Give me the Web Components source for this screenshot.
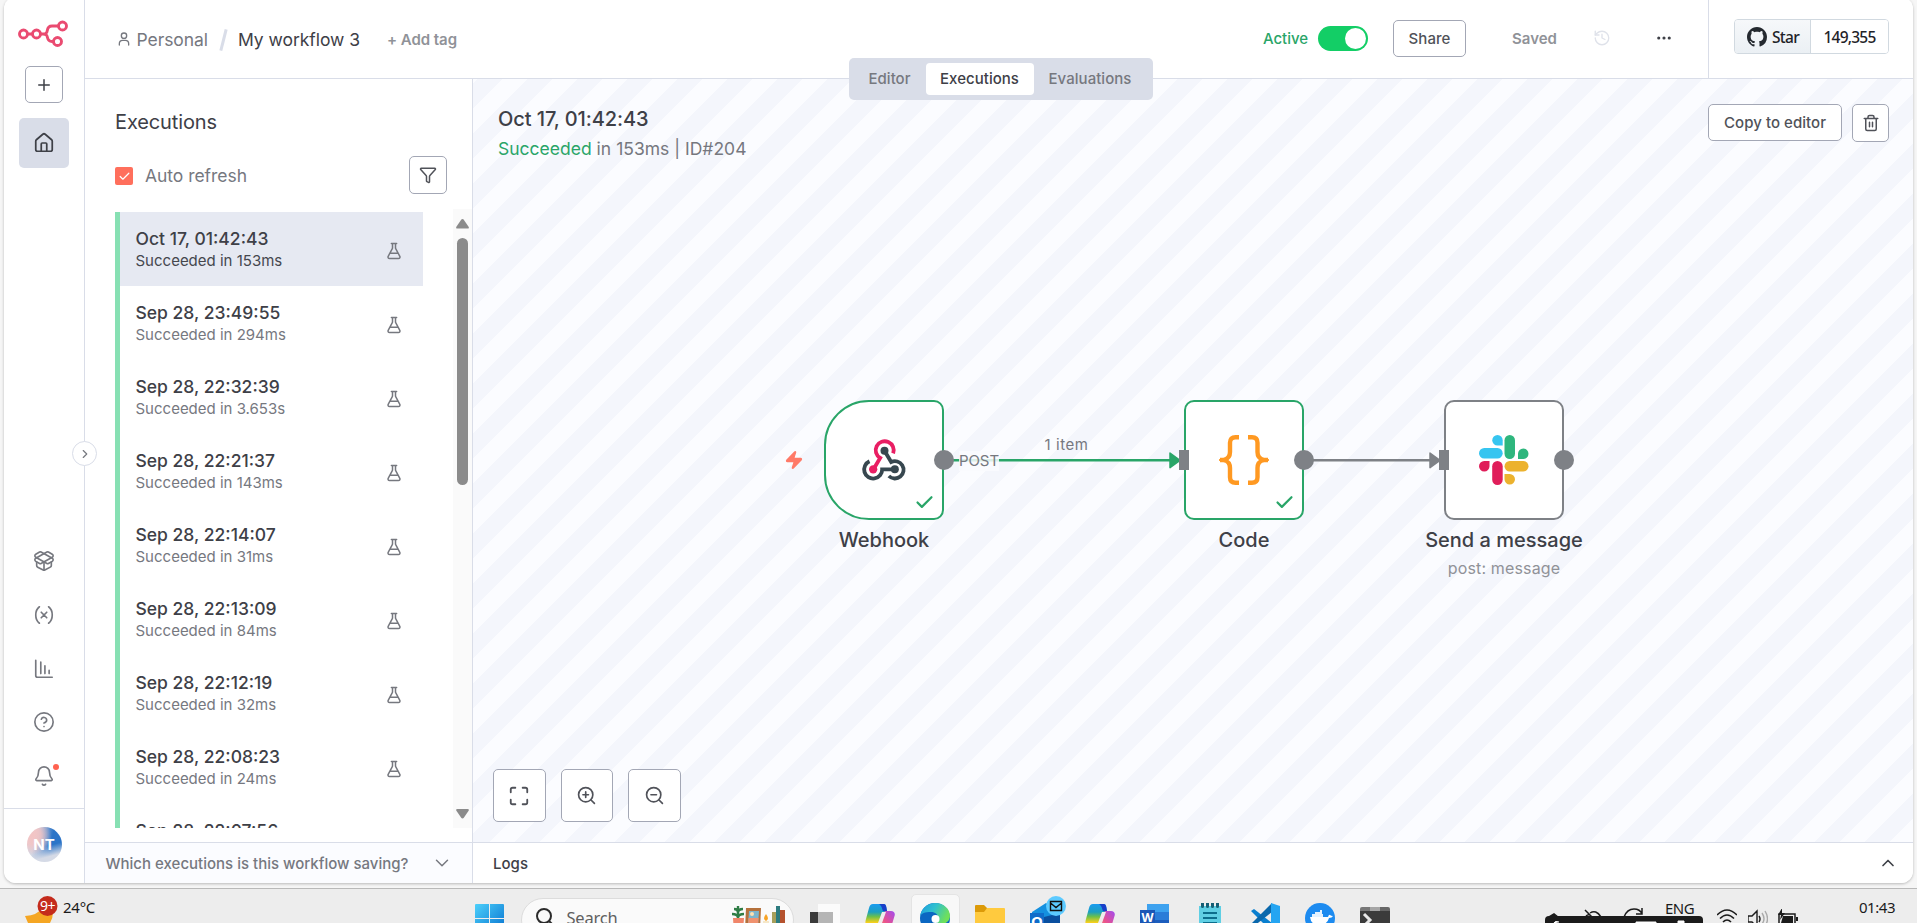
<!DOCTYPE html>
<html lang="en">
<head>
<meta charset="utf-8">
<title>My workflow 3 - n8n</title>
<style>
  html, body { margin: 0; height: 100%; overflow: hidden; background: #f6f6f6; }
  body { font-family: Inter, "Liberation Sans", sans-serif; font-size: 15px; color: #3e4047; }
</style>
</head>
<body>
<desktop-screen></desktop-screen>
<script>
const define = (name, css, html, after) => {
  const tpl = document.createElement('template');
  tpl.innerHTML = `<style>*{box-sizing:border-box}${css}</style>${html}`;
  customElements.define(name, class extends HTMLElement {
    constructor() {
      super();
      this.attachShadow({ mode: 'open' }).append(tpl.content.cloneNode(true));
    }
    connectedCallback() { if (after) after(this, this.shadowRoot); }
  });
};

/* ---------- stroke icons on a 24 grid ---------- */
const ICONS = {
  plus: '<path d="M5 12h14M12 5v14"/>',
  user: '<path d="M19 21v-2a5 5 0 0 0-5-5h-4a5 5 0 0 0-5 5v2"/><circle cx="12" cy="7" r="4"/>',
  house: '<path d="M15 21v-8a1 1 0 0 0-1-1h-4a1 1 0 0 0-1 1v8"/><path d="M3 10a2 2 0 0 1 .709-1.528l7-5.999a2 2 0 0 1 2.582 0l7 5.999A2 2 0 0 1 21 10v9a2 2 0 0 1-2 2H5a2 2 0 0 1-2-2z"/>',
  box: '<path d="M12 22v-9"/><path d="M15.17 2.21a1.67 1.67 0 0 1 1.63 0L21 4.57a1.93 1.93 0 0 1 0 3.36L8.82 14.79a1.655 1.655 0 0 1-1.64 0L3 12.43a1.93 1.93 0 0 1 0-3.36z"/><path d="M20 13v3.87a2.06 2.06 0 0 1-1.11 1.83l-6 3.08a1.93 1.93 0 0 1-1.78 0l-6-3.08A2.06 2.06 0 0 1 4 16.87V13"/><path d="M21 12.43a1.93 1.93 0 0 0 0-3.36L8.83 2.2a1.64 1.64 0 0 0-1.63 0L3 4.57a1.93 1.93 0 0 0 0 3.36l12.18 6.86a1.636 1.636 0 0 0 1.63 0z"/>',
  variable: '<path d="M7 21s-4-3-4-9 4-9 4-9M17 3s4 3 4 9-4 9-4 9M15 9l-6 6M9 9l6 6"/>',
  chart: '<path d="M3 2.5V19a2 2 0 0 0 2 2h16M8.5 4.500V17M13 8.500V17M17.600 13.500V17"/>',
  help: '<circle cx="12" cy="12" r="10"/><path d="M9.09 9a3 3 0 0 1 5.83 1c0 2-3 3-3 3M12 17h.01"/>',
  bell: '<path d="M10.268 21a2 2 0 0 0 3.464 0M3.262 15.326A1 1 0 0 0 4 17h16a1 1 0 0 0 .74-1.673C19.41 13.956 18 12.499 18 8A6 6 0 0 0 6 8c0 4.499-1.411 5.956-2.738 7.326"/>',
  funnel: '<path d="M10 20a1 1 0 0 0 .553.895l2 1A1 1 0 0 0 14 21v-7a2 2 0 0 1 .517-1.341L21.74 4.67A1 1 0 0 0 21 3H3a1 1 0 0 0-.742 1.67l7.225 7.989A2 2 0 0 1 10 14z"/>',
  flask: '<path d="M14 2v6a2 2 0 0 0 .245.96l5.51 10.08A2 2 0 0 1 18 22H6a2 2 0 0 1-1.755-2.96l5.51-10.08A2 2 0 0 0 10 8V2M6.453 15h11.094M8.500 2h7"/>',
  right: '<path d="m9 18 6-6-6-6"/>',
  down: '<path d="m6 9 6 6 6-6"/>',
  up: '<path d="m18 15-6-6-6 6"/>',
  check: '<path d="M20 6 9 17l-5-5"/>',
  history: '<path d="M3 12a9 9 0 1 0 9-9 9.750 9.750 0 0 0-6.740 2.740L3 8"/><path d="M3 3v5h5M12 7v5l4 2"/>',
  dots: '<circle cx="12" cy="12" r="1"/><circle cx="19" cy="12" r="1"/><circle cx="5" cy="12" r="1"/>',
  trash: '<path d="M3 6h18M19 6v14a2 2 0 0 1-2 2H7a2 2 0 0 1-2-2V6M8 6V4a2 2 0 0 1 2-2h4a2 2 0 0 1 2 2v2M10 11v6M14 11v6"/>',
  fit: '<path d="M8 3H5a2 2 0 0 0-2 2v3M21 8V5a2 2 0 0 0-2-2h-3M3 16v3a2 2 0 0 0 2 2h3M16 21h3a2 2 0 0 0 2-2v-3"/>',
  zoomin: '<circle cx="11" cy="11" r="9"/><path d="m22 22-4.600-4.600M11 7.500v7M7.500 11h7"/>',
  zoomout: '<circle cx="11" cy="11" r="9"/><path d="m22 22-4.600-4.600M7.500 11h7"/>',
  bolt: '<path fill="currentColor" d="M4 14a1 1 0 0 1-.780-1.630l9.900-10.200a.5.5 0 0 1 .860.460l-1.920 6.020A1 1 0 0 0 13 10h7a1 1 0 0 1 .780 1.630l-9.900 10.200a.5.5 0 0 1-.860-.460l1.920-6.020A1 1 0 0 0 11 14z"/>'
};
define('line-icon', ':host{display:block;flex:none;line-height:0}svg{display:block;fill:none;stroke:currentColor;stroke-linecap:round;stroke-linejoin:round}',
  '<svg viewBox="0 0 24 24"></svg>', (el, root) => {
    const svg = root.querySelector('svg'), s = el.getAttribute('size') || 20;
    svg.setAttribute('width', s); svg.setAttribute('height', s);
    svg.setAttribute('stroke-width', el.getAttribute('weight') || 2);
    svg.innerHTML = ICONS[el.getAttribute('name')];
  });

/* text run whose tracking is adjusted so that it spans a given width */
define('fit-text', ':host{display:inline-block;white-space:nowrap}', '<slot></slot>', el => {
  const w = +el.getAttribute('w'); if (!w) return;
  const n = el.textContent.length, natural = el.getBoundingClientRect().width;
  if (natural) { el.style.letterSpacing = ((w - natural) / n).toFixed(3) + 'px'; el.style.width = w + 'px'; }
});

/* ---------- left rail ---------- */
define('side-rail', `
  :host{display:flex;flex-direction:column;align-items:center;width:81px;border-right:1px solid #d9dde8;background:#fff;position:relative;color:#76787f}
  .logo{margin-top:18.500px;display:block;margin-left:-2px}
  .add{margin-top:17.500px;width:38px;height:37px;border:1px solid #a3a7b5;border-radius:5px;display:grid;place-items:center;color:#3e4047}
  .home{margin-top:15px;width:50px;height:50px;border-radius:5px;background:#d9dde8;display:grid;place-items:center;color:#3e4047}
  nav{margin-top:auto;display:flex;flex-direction:column;gap:31.700px;margin-bottom:21px}
  .bell{position:relative}
  .bell i{position:absolute;left:20px;top:-1px;width:6px;height:6px;border-radius:50%;background:#ff6250}
  .me{align-self:stretch;height:75px;border-top:1px solid #d9dde8;display:flex;justify-content:center;padding-top:18px}
  .av{width:35px;height:35px;border-radius:50%;display:grid;place-items:center;color:#fff;font-weight:700;font-size:15px;
    background:radial-gradient(circle at 15% 25%,#f3c4c4 0,rgba(243,196,196,.85) 22%,rgba(243,196,196,0) 48%),linear-gradient(165deg,rgba(213,218,230,0) 55%,#d5dae6 80%),linear-gradient(100deg,#d5d5e2 22%,#2b74c8 66%)}
  .tog{position:absolute;right:-13px;top:441px;width:25px;height:25px;border-radius:50%;border:1px solid #d9dde8;background:#fff;display:grid;place-items:center;z-index:3;color:#76787f}`,
  `<svg class="logo" width="52" height="30" viewBox="0 0 52 30" fill="none" stroke="#ea4b71" stroke-width="2.900">
     <circle cx="6.500" cy="15" r="4"/><circle cx="19.500" cy="15" r="4"/><circle cx="45.500" cy="7" r="4"/><circle cx="40.500" cy="22.500" r="4"/>
     <path d="M10.500 15h5M23.500 15h2.500c3.500 0 4-1.500 4.300-3.500.4-2.800 1.200-4.500 4.700-4.500h6.500M26 15c3.500 0 4 1.300 4.400 3.200.5 2.500 1.200 4.300 4.600 4.300h1.500"/></svg>
   <div class="add"><line-icon name="plus" size="18" weight="2"></line-icon></div>
   <div class="home"><line-icon name="house" size="22" weight="1.900"></line-icon></div>
   <nav><line-icon name="box" size="22" weight="1.800"></line-icon><line-icon name="variable" size="22" weight="1.800"></line-icon>
     <line-icon name="chart" size="22" weight="1.800"></line-icon><line-icon name="help" size="22" weight="1.800"></line-icon>
     <div class="bell"><line-icon name="bell" size="22" weight="1.800"></line-icon><i></i></div></nav>
   <div class="me"><div class="av">NT</div></div>
   <div class="tog"><line-icon name="right" size="14" weight="2"></line-icon></div>`);

/* ---------- header ---------- */
define('ui-button', ':host{display:inline-flex;align-items:center;justify-content:center;border:1px solid #a3a7b5;border-radius:5px;background:#fff;color:#505259;font-weight:500}', '<slot></slot>');

define('star-badge', `
  :host{display:flex;height:35px;border:1px solid #d1d9e0;border-radius:4px;overflow:hidden;font:500 15.500px "Noto Sans","Open Sans",sans-serif;color:#1f2328;width:155px}
  .a{width:76px;border-right:1px solid #d1d9e0;background:linear-gradient(#f6f8fa,#ebf0f4);display:flex;align-items:center;padding-left:12px;gap:5px}
  .b{flex:1;background:#fff;display:flex;align-items:center;padding-left:12.500px}`,
  `<div class="a"><svg width="20" height="20" viewBox="0 0 16 16" fill="#24292f"><path d="M8 0C3.580 0 0 3.580 0 8c0 3.540 2.290 6.530 5.470 7.590.4.070.550-.170.550-.380 0-.190-.010-.820-.010-1.490-2.010.370-2.530-.490-2.690-.940-.090-.230-.480-.940-.820-1.130-.280-.150-.680-.520-.010-.530.630-.010 1.080.580 1.230.820.720 1.210 1.870.870 2.330.660.070-.520.280-.870.510-1.070-1.780-.200-3.640-.890-3.640-3.950 0-.870.310-1.590.820-2.150-.080-.200-.360-1.020.080-2.120 0 0 .670-.210 2.200.820.640-.180 1.320-.270 2-.270s1.360.090 2 .270c1.530-1.040 2.200-.820 2.200-.820.440 1.100.160 1.920.080 2.120.510.560.820 1.270.820 2.150 0 3.070-1.870 3.750-3.650 3.950.290.250.540.730.540 1.480 0 1.070-.010 1.930-.010 2.200 0 .210.150.460.550.380A8.010 8.010 0 0 0 16 8c0-4.420-3.580-8-8-8z"/></svg><fit-text w="27">Star</fit-text></div>
   <div class="b"><fit-text w="52">149,355</fit-text></div>`);

define('top-bar', `
  :host{display:flex;height:79px;border-bottom:1px solid #d9dde8;background:#fff;position:relative}
  .crumbs{display:flex;align-items:center;height:78px;padding-left:30.500px;font-size:17.500px;color:#76787f}
  .crumbs .u{margin-right:5px}
  .sl{width:2.500px;height:22px;background:#d9dde8;transform:rotate(14deg);margin:1px 13.500px 0 14px}
  .name{color:#3e4047}
  .tag{font-size:15px;font-weight:600;color:#909298;margin-left:27px}
  .right{margin-left:auto;display:flex;align-items:center;height:77px;font-weight:500}
  .act{color:#29a568;margin-right:10px}
  .sw{width:50px;height:25px;border-radius:13px;background:#13ce66;display:flex;justify-content:flex-end;align-items:center;padding:2px}
  .sw i{width:21px;height:21px;border-radius:50%;background:#fff}
  .share{width:73px;height:37px;margin:0 46px 0 25px}
  .saved{font-weight:600;color:#909298}
  .gh{margin-left:35px;border-left:1px solid #d9dde8;height:78px;width:205px;padding:19px 0 0 25px;margin-top:1px}
  .tabs{position:absolute;left:763.500px;top:58px;width:304px;height:42px;border-radius:5px;background:#d9dde8;display:flex;align-items:center;font-weight:500;color:#76787f;padding:0 0 1px 20px;z-index:2}
  .on{margin:0 15px 0 15px;width:108px;height:32px;border-radius:4px;background:#fff;color:#3e4047;display:grid;place-items:center}`,
  `<div class="crumbs"><line-icon class="u" name="user" size="16" weight="2"></line-icon><fit-text w="71.500">Personal</fit-text><div class="sl"></div>
     <fit-text w="122" class="name">My workflow 3</fit-text><fit-text w="70" class="tag">+ Add tag</fit-text></div>
   <div class="right"><fit-text class="act" w="45">Active</fit-text><div class="sw"><i></i></div>
     <ui-button class="share"><fit-text w="42">Share</fit-text></ui-button>
     <fit-text class="saved" w="45">Saved</fit-text>
     <line-icon name="history" size="18" weight="1.800" style="color:#dfe2ea;margin:-2px 0 0 36px"></line-icon>
     <line-icon name="dots" size="18" weight="2.200" style="color:#3e4047;margin:-1px 0 0 44px"></line-icon>
     <div class="gh"><star-badge></star-badge></div></div>
   <div class="tabs"><fit-text w="42">Editor</fit-text><div class="on"><fit-text w="79">Executions</fit-text></div><fit-text w="83">Evaluations</fit-text></div>`);

/* ---------- executions list ---------- */
define('execution-item', `
  :host{display:flex;height:74px;border-left:5px solid #87e0b3;width:308px;padding:14px 0 0 15.500px;color:#76787f}
  :host([selected]){background:#e6e9f2;background-clip:padding-box}
  :host([selected]) .s{color:#45474e}
  .t{font-size:17.500px;line-height:25px;font-weight:500;color:#3e4047}
  .s{font-size:15px;line-height:18px;margin-top:1px}
  line-icon{margin:15.500px 20.500px 0 auto;color:#76787f}`,
  `<div><div class="t"><slot></slot></div><div class="s"></div></div><line-icon name="flask" size="18" weight="2"></line-icon>`,
  (el, r) => { if (el.hasAttribute('took')) r.querySelector('.s').textContent = 'Succeeded in ' + el.getAttribute('took'); });

define('executions-panel', `
  :host{display:flex;flex-direction:column;width:388px;border-right:1px solid #d9dde8;background:#fff;padding-left:30px}
  h1{font-size:20px;font-weight:400;line-height:28px;margin:29px 0 0;color:#3e4047}
  .auto{display:flex;align-items:center;height:38px;margin-top:20px;font-size:17.500px;color:#76787f}
  .cb{width:18px;height:18px;border-radius:2px;background:#ff6f5c;color:#fff;display:grid;place-items:center;margin:2px 12px 0 0}
  .auto ui-button{width:38px;height:38px;margin-left:auto;margin-right:25px}
  .scroll{display:flex;margin-top:15px;height:619px}
  .list{height:616px;margin-top:3px;overflow:hidden;flex:1}
  .bar{width:19px;background:#fafafa;display:flex;flex-direction:column;align-items:center;color:#8b8b8b}
  .thumb{width:11px;height:247px;border-radius:6px;background:#8b8b8b;margin-top:9px}
  .info{margin:14px 0 0 -30px;height:41px;border-top:1px solid #d9dde8;background:#fbfcff;display:flex;align-items:center;padding:0 19px 0 20.500px;justify-content:space-between;font-weight:500;color:#76787f}`,
  `<h1><fit-text w="102">Executions</fit-text></h1>
   <div class="auto"><div class="cb"><line-icon name="check" size="13" weight="2.200"></line-icon></div><fit-text w="102">Auto refresh</fit-text>
     <ui-button><line-icon name="funnel" size="18" weight="2"></line-icon></ui-button></div>
   <div class="scroll"><div class="list">
     <execution-item selected took="153ms">Oct 17, 01:42:43</execution-item>
     <execution-item took="294ms">Sep 28, 23:49:55</execution-item>
     <execution-item took="3.653s">Sep 28, 22:32:39</execution-item>
     <execution-item took="143ms">Sep 28, 22:21:37</execution-item>
     <execution-item took="31ms">Sep 28, 22:14:07</execution-item>
     <execution-item took="84ms">Sep 28, 22:13:09</execution-item>
     <execution-item took="32ms">Sep 28, 22:12:19</execution-item>
     <execution-item took="24ms">Sep 28, 22:08:23</execution-item>
     <execution-item>Sep 28, 22:07:56</execution-item>
   </div><div class="bar">
     <svg width="13" height="10" viewBox="0 0 13 10" style="margin-top:10px" fill="currentColor"><path d="M6.500 0q.8 0 1.300.7l4.800 7q.9 1.800-1.100 1.800H1.500Q-.5 9.500.4 7.700l4.800-7Q5.700 0 6.500 0z"/></svg>
     <div class="thumb"></div>
     <svg width="13" height="10" viewBox="0 0 13 10" style="margin:auto 0 9px" fill="currentColor"><path d="M6.500 9.500q-.8 0-1.300-.7L.4 1.800Q-.5 0 1.500 0h10q2 0 1.100 1.800l-4.800 7q-.5.7-1.300.7z"/></svg>
   </div></div>
   <div class="info"><fit-text w="303">Which executions is this workflow saving?</fit-text><line-icon name="down" size="22" weight="1.600"></line-icon></div>`);

/* ---------- canvas ---------- */
define('flow-node', `
  :host{position:absolute;width:120px;display:block}
  .box{width:120px;height:120px;border:2px solid var(--line,#29a568);border-radius:10px;background:#fff;display:grid;place-items:center;position:relative}
  :host([trigger]) .box{border-radius:45px 10px 10px 45px}
  .ok{position:absolute;right:7.500px;bottom:5.500px;color:#29a568}
  :host([pending]) .ok{display:none}
  :host([pending]){--line:#7e8186}
  .in{position:absolute;left:-7px;top:48px;width:10px;height:20px;background:#7e8186}
  :host([trigger]) .in{display:none}
  .out{position:absolute;right:-11.500px;top:48px;width:20px;height:20px;border-radius:50%;background:#7e8186}
  .cap{width:200px;margin:7px 0 0 -40px;text-align:center;font-size:20px;line-height:26px;font-weight:500;color:#3e4047}
  .sub{width:200px;margin:4px 0 0 -40px;text-align:center;font-size:16px;line-height:22px;color:#909298}`,
  `<div class="box"><slot name="icon"></slot><line-icon class="ok" name="check" size="21" weight="2.500"></line-icon><div class="in"></div><div class="out"></div></div>
   <div class="cap"><slot></slot></div><div class="sub"><slot name="sub"></slot></div>`);

define('flow-canvas', `
  :host{display:block;flex:1;position:relative;overflow:hidden;background:repeating-linear-gradient(135deg,#fbfcff 0 3.500px,#f4f6fc 3.500px 21.178px,#fbfcff 21.178px 35.355px)}
  .head{display:flex;justify-content:space-between;padding:25px 24px 0 25px;height:120px}
  .t1{font-size:20px;line-height:28px;color:#3e4047;margin-top:1px;font-weight:450}
  .t2{font-size:17.500px;line-height:24px;color:#76787f;margin-top:4px}
  .t2 b{font-weight:400;color:#29a568}
  .acts{display:flex;gap:10px;align-items:flex-start}
  svg.edges{position:absolute;left:0;top:0}
  .lab{position:absolute;font-size:15px;line-height:20px;color:#76787f}
  .post{background:rgba(249,250,254,.85)}
  .bolt{position:absolute;left:311px;top:370.500px;color:#ff7a68}
  .zoom{display:flex;gap:15px;position:absolute;left:20px;bottom:20px}
  .zoom ui-button{width:52.500px;height:53px}`,
  `<div class="head"><div><div class="t1"><fit-text w="150.500">Oct 17, 01:42:43</fit-text></div><div class="t2"><fit-text w="248.500"><b>Succeeded</b> in 153ms | ID#204</fit-text></div></div>
     <div class="acts"><ui-button style="width:134px;height:37px"><fit-text w="102">Copy to editor</fit-text></ui-button><ui-button style="width:37px;height:38px"><line-icon name="trash" size="18" weight="2"></line-icon></ui-button></div></div>
   <svg class="edges" width="1440" height="762" fill="none"><path d="M480 381.300H697" stroke="#29a568" stroke-width="2.600"/><path d="M697 374l10 7.300-10 7.300z" fill="#29a568" stroke="#29a568" stroke-width="1.500" stroke-linejoin="round"/>
     <path d="M840 381.300H957" stroke="#7e8186" stroke-width="2.600"/><path d="M957 374l10 7.300-10 7.300z" fill="#7e8186" stroke="#7e8186" stroke-width="1.500" stroke-linejoin="round"/></svg>
   <fit-text w="40" class="lab post" style="left:486px;top:372px">POST</fit-text>
   <fit-text w="44" class="lab" style="left:571.500px;top:356px">1 item</fit-text>
   <line-icon class="bolt" name="bolt" size="20" weight="1.500"></line-icon>
   <flow-node trigger style="left:351px;top:321px">Webhook
     <svg slot="icon" width="50" height="50" viewBox="297.500 165 150 150" fill="none" stroke-width="11.500">
       <path d="M329 244a27 27 0 1 0 38 24h38" stroke="#37474f"/><path d="M374 212l20 34a26 26 0 1 1-7 42" stroke="#37474f"/>
       <path d="M400 220a27 27 0 1 0-39 14l-20 34" stroke="#e91e63"/><circle cx="374" cy="212" r="12" fill="#37474f"/><circle cx="405" cy="268" r="12" fill="#37474f"/><circle cx="340" cy="268" r="12.500" fill="#e91e63"/></svg></flow-node>
   <flow-node style="left:711px;top:321px">Code
     <svg slot="icon" width="50" height="50" viewBox="0 0 50 50" fill="none" stroke="#ff9922" stroke-width="4.400"><path d="M20 2.200h-3.500q-5.500 0-5.500 5.500V17c0 4.500-2.500 7-6 8v0c3.500 1 6 3.500 6 8v9.300q0 5.500 5.500 5.500H20"/><path d="M29 2.200h4q5.500 0 5.500 5.500V17c0 4.500 2.500 7 6 8v0c-3.500 1-6 3.500-6 8v9.300q0 5.500-5.500 5.500h-4"/><path d="M1 25h5M43.500 25h5.500"/></svg></flow-node>
   <flow-node pending style="left:971px;top:321px">Send a message
     <svg slot="icon" width="50" height="50" viewBox="0 0 50 50"><g fill="#36c5f0"><path d="M18.500 0A5.200 5.200 0 0 0 18.500 10.500h5.200V5.200A5.200 5.200 0 0 0 18.500 0z"/><rect x="0" y="13" width="23.700" height="10.500" rx="5.250"/></g>
       <g fill="#2eb67d"><rect x="25.500" y="0" width="10.500" height="24" rx="5.250"/><path d="M49.500 18.700A5.200 5.200 0 0 0 39 18.700v5.200h5.200a5.200 5.200 0 0 0 5.300-5.200z"/></g>
       <g fill="#ecb22e"><rect x="25.500" y="26" width="24" height="10.500" rx="5.250"/><path d="M25.500 39h5.200a5.250 5.250 0 1 1-5.200 5.250z"/></g>
       <g fill="#e01e5a"><rect x="13.200" y="26" width="10.500" height="24" rx="5.250"/><path d="M10.500 26v5.200A5.250 5.250 0 1 1 5.250 26z"/></g></svg><fit-text slot="sub" w="112.500">post: message</fit-text></flow-node>
   <div class="zoom"><ui-button><line-icon name="fit" size="22" weight="2"></line-icon></ui-button><ui-button><line-icon name="zoomin" size="19" weight="2.100"></line-icon></ui-button><ui-button><line-icon name="zoomout" size="19" weight="2.100"></line-icon></ui-button></div>`);

define('app-window', `
  :host{display:flex;margin:-3px 4px 0 4px;padding-top:3px;height:886px;background:#fff;border-radius:12px;overflow:hidden;box-shadow:0 1px 3px rgba(0,0,0,.25);position:relative}
  .main{flex:1;display:flex;flex-direction:column;min-width:0}
  .row{flex:1;display:flex;min-height:0}
  .right{flex:1;display:flex;flex-direction:column;min-width:0}
  .logs{height:41px;border-top:1px solid #d9dde8;background:#fff;display:flex;align-items:center;justify-content:space-between;padding:0 15px 0 20px;font-weight:500;color:#3e4047}`,
  `<side-rail></side-rail><div class="main"><top-bar></top-bar><div class="row"><executions-panel></executions-panel>
   <div class="right"><flow-canvas></flow-canvas><div class="logs"><fit-text w="35">Logs</fit-text><line-icon name="up" size="20" weight="2"></line-icon></div></div></div></div>`);

/* ---------- taskbar ---------- */
const copilot = id => `<svg width="30" height="30" viewBox="0 0 30 30"><defs><linearGradient id="${id}a" x1="0" y1="0" x2="0" y2="1"><stop offset="0" stop-color="#1b9cf0"/><stop offset=".35" stop-color="#1c9fc0"/><stop offset=".55" stop-color="#6cc04a"/><stop offset=".8" stop-color="#f5cf1d"/></linearGradient><linearGradient id="${id}b" x1="1" y1="0" x2="0" y2="1"><stop offset="0" stop-color="#a14bf0"/><stop offset=".5" stop-color="#e8528e"/><stop offset="1" stop-color="#ff9a50"/></linearGradient></defs>
  <path d="M8 1h11c2 0 2.500 3 3 8h-4L12 24H3c-3-1-3-5-2-8L4 5c.7-2.500 1.800-4 4-4z" fill="url(#${id}a)"/><path d="M14 1h5c2 0 2.500 3 3 7h-4c-1-2-1-5-4-7z" fill="#1a3fc9"/><path d="M20 8h6c3 0 4.500 2.500 3.500 5L25 28H11l5-13z" fill="url(#${id}b)"/><path d="M17 9h4l-4 11h-4z" fill="#efecec"/></svg>`;
define('task-bar', `
  :host{display:flex;position:relative;margin-top:5px;height:35px;border-top:1px solid #b9b9b9;background:#ededed;font-family:"Noto Sans","Open Sans",sans-serif;color:#1b1b1b;overflow:hidden;font-size:15px}
  .w{width:461.500px;display:flex;padding-left:25px;flex:none}
  .temp{margin:7px 0 0 4px;line-height:22px}
  .temp div{line-height:20px;margin:0 0 0 3px}
  .c{width:55px;height:40px;display:flex;justify-content:center;padding-top:14px;flex:none}
  .pill{width:273.500px;height:44px;margin:9px 3.500px 0 4px;border:1px solid #dcdcdc;border-radius:22px;background:#fafafa;flex:none;display:flex}
  .pill span{font-size:16.500px;color:#5f5f5f;margin:7px 0 0 12px;line-height:24px}
  .edge{width:49px;margin:5px 3px 0;height:40px;border-radius:5px 5px 0 0;background:#f8f8f8;border:1px solid #e4e4e4;padding-top:8px}
  .tray{margin-left:auto;display:flex;align-items:flex-start}
  .clock{width:76px;margin:8px 22px 0 21px;line-height:20px;display:flex;flex-direction:column;align-items:flex-end}
  .black{position:absolute;left:1545px;top:27px;width:158px;height:12px;border-radius:4px 4px 0 0;background:#1b1b1b}
  svg{display:block;flex:none}`,
  `<div class="w"><svg width="34" height="34" viewBox="0 0 34 34"><path d="M0 27q13-1 17-8l11 4q0 6-3 11H3z" fill="#f5a623"/><circle cx="22.500" cy="17" r="10" fill="#c42b1c"/><text x="15" y="22.300" font-size="14" fill="#fff" font-family="Noto Sans, sans-serif" textLength="15.500">9+</text></svg>
     <div class="temp"><fit-text w="32">24°C</fit-text><div>Clear</div></div></div>
   <div class="c" style="padding-top:15px"><svg width="29" height="29" viewBox="0 0 29 29"><defs><linearGradient id="w" x1="0" y1="0" x2="1" y2="1"><stop offset="0" stop-color="#4cd0fb"/><stop offset="1" stop-color="#0670ce"/></linearGradient></defs><path d="M0 1q0-1 1-1h13v14H0zM15 0h13q1 0 1 1v13H15zM0 15h14v14H0zM15 15h14v14H15z" fill="url(#w)"/></svg></div>
   <div class="pill"><svg width="20" height="24" viewBox="0 0 20 24" style="margin:9px 0 0 13px" fill="none" stroke="#2b2b2b" stroke-width="2"><circle cx="9" cy="8" r="7"/><path d="M14 13l6 6"/></svg><span><fit-text w="51">Search</fit-text></span>
     <svg width="54" height="26" viewBox="0 0 54 26" style="margin:7px 0 0 auto;margin-right:7px"><path d="M6 0v12M2 3q4 0 4 4 0-4 5-4M0 8q6 0 6 4 0-4 6-4" stroke="#2f7d46" stroke-width="2.400" fill="none"/><path d="M1 12h11l-1 14H2z" fill="#f0866a"/><path d="M14 2h15l-1 22H13z" fill="#b5713c"/><path d="M17 5h10l-1 15H16z" fill="#7eb5cc"/><path d="M16.500 12h10L26 20H16z" fill="#f0926f"/><circle cx="20" cy="8" r="2" fill="#ffe0b0"/><path d="M34 8q4 5 0 7-4-2 0-7z" fill="#f7a325"/><path d="M31 15h6v12h-6z" fill="#f5e7c8"/><path d="M40 6h5v20h-5z" fill="#a8a05b"/><path d="M44 0h4v26h-4z" fill="#2d7c80"/><path d="M48 4h5v22h-5z" fill="#b5522e"/></svg></div>
   <div class="c"><svg width="30" height="30" viewBox="0 0 30 30"><path d="M0 9h18v14H0z" fill="#3a3a3a"/><path d="M8 1h22v22H8z" fill="#fbfbfb"/><path d="M8 9h15v16H8z" fill="#b5b5b5"/></svg></div>
   <div class="c">${copilot('p')}</div>
   <div class="c edge"><svg width="30" height="30" viewBox="0 0 30 30"><defs><linearGradient id="e" x1="0" y1="0" x2="1" y2=".4"><stop offset="0" stop-color="#1d9ce0"/><stop offset=".5" stop-color="#2fc0cf"/><stop offset="1" stop-color="#6fe05a"/></linearGradient></defs><circle cx="15" cy="15" r="15" fill="#0b67c2"/><path d="M0 14C1 5 8 0 15 0c9 0 15 6 15 13 0 5-4 8-9 8-3 0-5-1-4-3 3-4 0-9-6-9S1 10 0 14z" fill="url(#e)"/><circle cx="15.500" cy="16" r="4" fill="#fff"/><path d="M11 16q0 10 12 11H11z" fill="#0c4f9c"/></svg></div>
   <div class="c"><svg width="30" height="30" viewBox="0 0 30 30"><path d="M0 3q0-1 1-1h8l3 3v6H0z" fill="#dc9a08"/><path d="M0 9h9l3-4h17q1 0 1 1v24H0z" fill="#ffca3e"/></svg></div>
   <div class="c"><svg width="42" height="36" viewBox="0 0 42 36" style="margin:-8px 0 0 12px"><path d="M2 17l14-9 14 9v19H2z" fill="#1490df"/><path d="M14 22l16-4v18H14z" fill="#0a4f9f"/><path d="M0 18h14v18H0z" fill="#0f6cc9"/><text x="1" y="31.500" font-size="15" font-weight="700" fill="#fff" font-family="Noto Sans, sans-serif">O</text><circle cx="26" cy="11" r="10" fill="#5ccaff"/><path d="M20.500 6.500h11v9h-11zM20.500 8l5.500 4.500L31.500 8" fill="none" stroke="#111" stroke-width="1.400"/></svg></div>
   <div class="c">${copilot('q')}</div>
   <div class="c"><svg width="30" height="30" viewBox="0 0 30 30"><path d="M7 1h22v8H7z" fill="#3ea2ef"/><path d="M7 9h22v8H7z" fill="#2b7cd8"/><path d="M7 17h22v13H7z" fill="#1c5dbd"/><path d="M0 7h15v16H0z" fill="#1b57b6"/><text x="1.500" y="19" font-size="12.500" font-weight="700" fill="#fff" font-family="Noto Sans, sans-serif">W</text></svg></div>
   <div class="c"><svg width="24" height="30" viewBox="0 0 24 30"><path d="M1 3h22v27H1z" fill="#5fcfe4"/><path d="M5 10h14M5 15h14M5 20h14" stroke="#0b6e8d" stroke-width="2"/><path d="M4.500.5v3M9.500.5v3M14.500.5v3M19.500.5v3" stroke="#155f76" stroke-width="3" stroke-linecap="round"/></svg></div>
   <div class="c"><svg width="30" height="30" viewBox="0 0 30 30"><path d="M1 8l3-2 18 14v9z" fill="#0a7fcf"/><path d="M1 21L22 0v9L4 23z" fill="#0a68ac"/><path d="M21 0l9 3v24l-9 3z" fill="#25a5f2"/></svg></div>
   <div class="c"><svg width="30" height="30" viewBox="0 0 30 30"><circle cx="15" cy="15" r="15" fill="#1d8bf0"/><path d="M5 14h18q1-3 2-2 1 1 3 1-1 2-4 2-2 7-10 7-8 0-9-8z" fill="#fff"/><path d="M7 11h11v3H7zM10 9h7v2h-7zM15 7h2v2h-2z" fill="#e4f2ff"/></svg></div>
   <div class="c"><svg width="30" height="30" viewBox="0 0 30 30"><path d="M0 6q0-2 2-2h8v5H0z" fill="#777"/><path d="M10 4h10v5H10z" fill="#a5a5a5"/><path d="M20 4h8q2 0 2 2v3H20z" fill="#666"/><path d="M0 8h30v22H0z" fill="#3b3b3b"/><path d="M4 11l6 6-6 6" stroke="#e8e8e8" stroke-width="3" fill="none"/></svg></div>
   <div class="tray">
     <svg width="100" height="34" viewBox="0 0 100 34" fill="none" stroke="#1b1b1b" stroke-width="1.500" style="margin-right:19px"><path d="M5 28l5-3 4 3" fill="#1b1b1b"/><path d="M41 21l14 14M46 24q6-4 11 4M42 27q2-2 4-1"/><path d="M80 28q3-8 10-8 6 0 8 5M98 19v6h-6"/></svg>
     <fit-text w="29" style="margin:8.500px 0 0 2px;line-height:20px">ENG</fit-text>
     <svg width="20" height="20" viewBox="0 0 20 20" fill="none" stroke="#1b1b1b" stroke-width="1.600" style="margin:20px 11px 0 23px"><path d="M0 6q10-10 20 0M3 9.500q7-7 14 0M6 13q4-4 8 0"/></svg>
     <svg width="20" height="20" viewBox="0 0 20 20" fill="none" stroke="#1b1b1b" stroke-width="1.400" style="margin:20px 10px 0 0"><path d="M0 7h4l5-5v16l-5-5H0zM11 7q2 3 0 6"/><path d="M14 4q4 6 0 11M17 2q5 8 0 15" stroke="#aaa"/></svg>
     <svg width="20" height="20" viewBox="0 0 20 20" style="margin:20px 0 0"><path d="M1 5h16v10H1z" fill="none" stroke="#1b1b1b" stroke-width="1.500"/><path d="M5 7h10v7H3z" fill="#1b1b1b"/><path d="M4-1L0 6h3l-1 5 5-7H4z" fill="#1b1b1b"/><path d="M19 8v4" stroke="#1b1b1b" stroke-width="2"/></svg>
     <div class="clock"><fit-text w="36">01:43</fit-text><fit-text w="75">17-10-2025</fit-text></div></div>
   <div class="black"><svg width="158" height="12" viewBox="0 0 158 12"><path d="M8 8q2-4 6-2M91 6h20v2H91zM133 5h6v6h-6z" fill="#fff" stroke="#fff"/></svg></div>`);

define('desktop-screen', ':host{display:block;height:923px;overflow:hidden;background:#f6f6f6}', '<app-window></app-window><task-bar></task-bar>');
</script>
</body>
</html>
